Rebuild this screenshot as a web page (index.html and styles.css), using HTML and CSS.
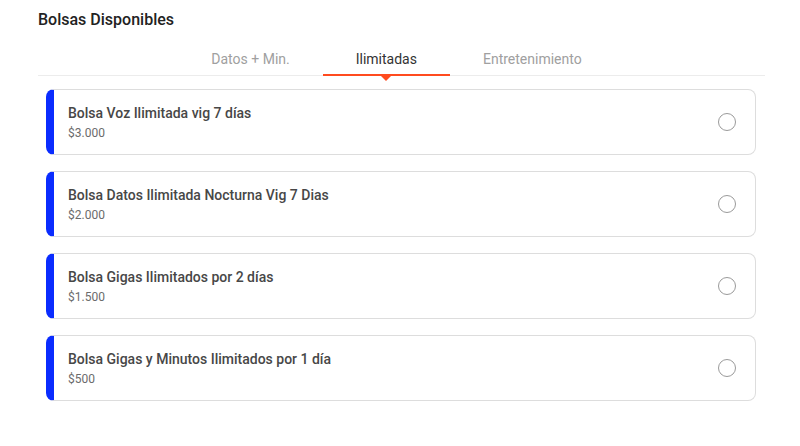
FILE: index.html
```html
<!DOCTYPE html>
<html lang="es">
<head>
    <meta charset="UTF-8">
    <meta name="viewport" content="width=device-width, initial-scale=1.0">
    <title>Bolsas Disponibles</title>
    <link rel="stylesheet" href="styles.css">
</head>
<body>

    <div class="page">
        <h1 class="title">Bolsas Disponibles</h1>

        <!-- Tabs -->
        <div class="tabs">
            <div class="tab">Datos + Min.</div>
            <div class="tab active">Ilimitadas</div>
            <div class="tab">Entretenimiento</div>
        </div>

        <!-- Bag list -->
        <div class="bags">
            <label class="bag">
                <div class="bag-info">
                    <div class="bag-name">Bolsa Voz Ilimitada vig 7 días</div>
                    <div class="bag-price">$3.000</div>
                </div>
                <span class="radio"></span>
            </label>
            <label class="bag">
                <div class="bag-info">
                    <div class="bag-name">Bolsa Datos Ilimitada Nocturna Vig 7 Dias</div>
                    <div class="bag-price">$2.000</div>
                </div>
                <span class="radio"></span>
            </label>
            <label class="bag">
                <div class="bag-info">
                    <div class="bag-name">Bolsa Gigas Ilimitados por 2 días</div>
                    <div class="bag-price">$1.500</div>
                </div>
                <span class="radio"></span>
            </label>
            <label class="bag">
                <div class="bag-info">
                    <div class="bag-name">Bolsa Gigas y Minutos Ilimitados por 1 día</div>
                    <div class="bag-price">$500</div>
                </div>
                <span class="radio"></span>
            </label>
        </div>
    </div>

</body>
</html>
```

FILE: styles.css
```css
/* Page base */
body {
    font-family: Roboto, "Noto Sans", Arial, sans-serif;
    margin: 0;
    padding: 0;
    background-color: #ffffff;
    color: #333333;
}

.page {
    padding: 10px 35px 0 38px;
}

/* Heading */
.title {
    font-size: 16px;
    font-weight: 500;
    line-height: 20px;
    margin: 0;
    color: #222222;
}

/* Tabs */
.tabs {
    display: flex;
    justify-content: center;
    border-bottom: 1px solid #ececec;
    margin-top: 17px;
    padding-right: 10px;
}

.tab {
    position: relative;
    font-size: 14px;
    line-height: 18px;
    padding: 3px 33px 6px;
    color: #a0a0a0;
    cursor: pointer;
}

.tab.active {
    color: #333333;
    border-bottom: 2px solid #ff4b1f;
    margin-bottom: -1px;
}

.tab.active::after {
    content: "";
    position: absolute;
    left: 50%;
    bottom: -7px;
    margin-left: -5px;
    border-left: 5px solid transparent;
    border-right: 5px solid transparent;
    border-top: 5px solid #ff4b1f;
}

/* Bag cards */
.bags {
    display: flex;
    flex-direction: column;
    gap: 16px;
    padding: 13px 9px 0 8px;
}

.bag {
    display: flex;
    align-items: center;
    justify-content: space-between;
    height: 66px;
    box-sizing: border-box;
    border: 1px solid #dddddd;
    border-left: 8px solid #0a2cff;
    border-radius: 8px;
    padding: 0 19px 0 14px;
    cursor: pointer;
}

.bag-name {
    font-size: 14px;
    font-weight: 500;
    line-height: 18px;
    color: #474747;
}

.bag-price {
    font-size: 12px;
    line-height: 16px;
    margin-top: 3px;
    color: #6b6b6b;
}

.radio {
    width: 16px;
    height: 16px;
    border: 1.5px solid #9a9a9a;
    border-radius: 50%;
}
```
